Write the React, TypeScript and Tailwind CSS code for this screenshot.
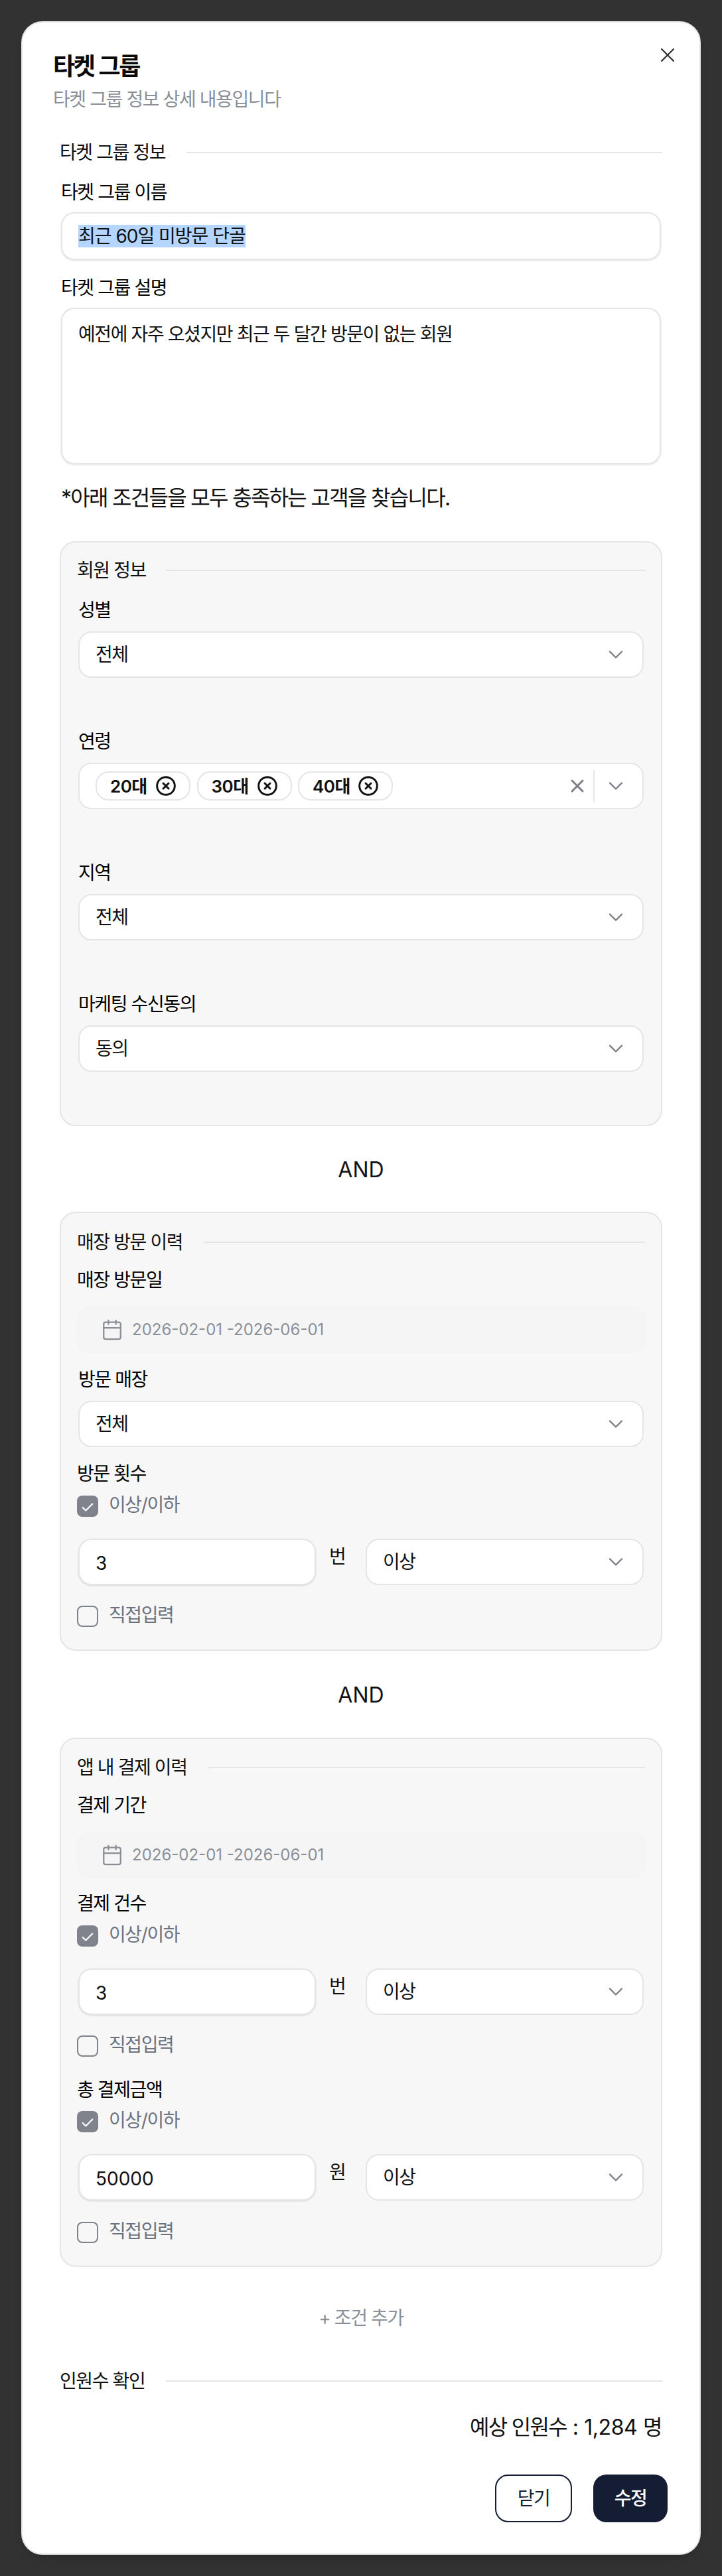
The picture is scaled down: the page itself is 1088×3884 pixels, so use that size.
import React from 'react';
import { Calendar, Check, ChevronDown, CircleX, X } from 'lucide-react';

// 구분선이 붙은 섹션 제목
const SectionTitle = ({ title, gap, className = '' }: { title: string; gap: string; className?: string }) => (
  <div className={`flex items-center h-[40px] ${className}`}>
    <span className="leading-[40px] text-[#111]">{title}</span>
    <div className={`flex-1 h-[2px] bg-[#e5e5e5] ${gap}`} />
  </div>
);

const FieldLabel = ({ text, className = '' }: { text: string; className?: string }) => (
  <div className={`leading-[40px] text-black ${className}`}>{text}</div>
);

const Chevron = () => <ChevronDown size={36} strokeWidth={1.6} className="text-[#7b7e86] shrink-0" />;

const SelectBox = ({ value, className = '' }: { value: string; className?: string }) => (
  <div className={`h-[70px] flex items-center justify-between pl-[24px] pr-[22px] bg-white border-2 border-[#e5e5e5] rounded-[20px] text-[#111] ${className}`}>
    <span>{value}</span>
    <Chevron />
  </div>
);

const DateRange = ({ className = '' }: { className?: string }) => (
  <div className={`h-[70px] flex items-center pl-[34px] bg-[#f5f5f5] border-2 border-[#f3f3f3] rounded-[20px] ${className}`}>
    <Calendar size={34} strokeWidth={1.6} className="text-[#8a8f98]" />
    <span className="ml-[13px] text-[24px] tracking-normal text-[#8a8f98]">2026-02-01 -2026-06-01</span>
  </div>
);

const CheckRow = ({ text, checked = false, className = '' }: { text: string; checked?: boolean; className?: string }) => (
  <div className={`flex items-center h-[32px] ${className}`}>
    {checked ? (
      <div className="w-[32px] h-[32px] rounded-[8px] bg-[#80838c] flex items-center justify-center pt-[3px]">
        <Check size={22} strokeWidth={2.4} className="text-white" />
      </div>
    ) : (
      <div className="w-[32px] h-[32px] rounded-[8px] border-2 border-[#80838c]" />
    )}
    <span className="ml-[16px] -mt-[4px] leading-[32px] text-[#6b7280]">{text}</span>
  </div>
);

const CountRow = ({ value, unit, className = '' }: { value: string; unit: string; className?: string }) => (
  <div className={`flex mx-[2px] ${className}`}>
    <input
      readOnly
      value={value}
      className="w-[358px] h-[70px] pt-[4px] pl-[24px] bg-white border-2 border-[#e5e5e5] rounded-[20px] shadow-sm tracking-normal text-[#111] outline-none"
    />
    <span className="w-[75px] h-[54px] pl-[20px] leading-[54px] text-[#111]">{unit}</span>
    <SelectBox value="이상" className="flex-1" />
  </div>
);

const AndText = ({ className = '' }: { className?: string }) => (
  <div className={`text-center text-[32px] leading-[48px] tracking-normal text-[#111] ${className}`}>AND</div>
);

export default function App() {
  return (
    <div className="min-h-[3884px] bg-[#323232] px-[32px] pt-[32px] text-[28px] tracking-[-1.4px] font-['Inter','Noto_Sans_CJK_KR',sans-serif]">
      <div className="relative h-[3820px] bg-white border-2 border-[#e5e5e5] rounded-[32px] shadow-lg">
        <button className="absolute right-[30px] top-[31px] text-[#333]">
          <X size={36} strokeWidth={1.5} />
        </button>

        <div className="pl-[46px] pt-[46px]">
          <h2 className="text-[36px] leading-[40px] tracking-[-2.3px] font-semibold text-[#0a0a0a]">타켓 그룹</h2>
          <p className="mt-[10px] leading-[40px] text-[#8a8f98]">타켓 그룹 정보 상세 내용입니다</p>
        </div>

        <div className="px-[56px]">
          <SectionTitle title="타켓 그룹 정보" gap="ml-[32px]" className="mt-[40px]" />

          <FieldLabel text="타켓 그룹 이름" className="mt-[20px] ml-[2px]" />
          <div className="mt-[10px] mx-[2px] h-[72px] flex items-center pl-[24px] border-2 border-[#e5e5e5] rounded-[20px] shadow-sm tracking-[-1px] text-[#111]">
            <span className="inline-block leading-[34px] bg-[#b4d5fe]">최근 60일 미방문 단골</span>
          </div>

          <FieldLabel text="타켓 그룹 설명" className="mt-[22px] ml-[2px]" />
          <textarea
            readOnly
            value="예전에 자주 오셨지만 최근 두 달간 방문이 없는 회원"
            className="block mt-[10px] mx-[2px] w-[904px] h-[236px] pt-[20px] pl-[24px] border-2 border-[#e5e5e5] rounded-[20px] shadow-sm leading-[36px] text-[#111] resize-none outline-none"
          />

          <p className="mt-[27px] ml-[2px] text-[32px] leading-[48px] tracking-[-1.7px] text-[#111]">*아래 조건들을 모두 충족하는 고객을 찾습니다.</p>

          {/* 회원 정보 */}
          <div className="mt-[41px] h-[882px] px-[24px] pt-[22px] bg-[#f7f7f7] border-2 border-[#e5e5e5] rounded-[24px]">
            <SectionTitle title="회원 정보" gap="ml-[30px]" />
            <FieldLabel text="성별" className="mt-[20px] ml-[2px]" />
            <SelectBox value="전체" className="mt-[12px] mx-[2px]" />

            <FieldLabel text="연령" className="mt-[76px] ml-[2px]" />
            <div className="mt-[12px] mx-[2px] h-[70px] flex items-center pl-[24px] pr-[22px] bg-white border-2 border-[#e5e5e5] rounded-[20px]">
              {['20대', '30대', '40대'].map(age => (
                <div key={age} className="flex items-center w-[143px] h-[44px] mr-[9.5px] pl-[20px] bg-white border-2 border-[#e5e5e5] rounded-[20px]">
                  <span className="w-[69px] text-[26px] tracking-[-0.5px] font-semibold text-[#111]">{age}</span>
                  <CircleX size={32} strokeWidth={2.2} className="text-[#111] -ml-[1px]" />
                </div>
              ))}
              <X size={32} strokeWidth={2.2} className="ml-auto text-[#7b7e86]" />
              <div className="w-[2px] h-[48px] ml-[8px] mr-[14px] bg-[#e5e5e5]" />
              <Chevron />
            </div>

            <FieldLabel text="지역" className="mt-[76px] ml-[2px]" />
            <SelectBox value="전체" className="mt-[12px] mx-[2px]" />

            <FieldLabel text="마케팅 수신동의" className="mt-[76px] ml-[2px]" />
            <SelectBox value="동의" className="mt-[12px] mx-[2px]" />
          </div>

          <AndText className="mt-[42px]" />

          {/* 매장 방문 이력 */}
          <div className="mt-[39px] h-[662px] px-[24px] pt-[24px] bg-[#f7f7f7] border-2 border-[#e5e5e5] rounded-[24px]">
            <SectionTitle title="매장 방문 이력" gap="ml-[32px]" />
            <FieldLabel text="매장 방문일" className="mt-[17px]" />
            <DateRange className="mt-[20px]" />
            <FieldLabel text="방문 매장" className="mt-[20px] ml-[2px]" />
            <SelectBox value="전체" className="mt-[12px] mx-[2px]" />
            <FieldLabel text="방문 횟수" className="mt-[20px]" />
            <CheckRow text="이상/이하" checked className="mt-[13px]" />
            <CountRow value="3" unit="번" className="mt-[33px]" />
            <CheckRow text="직접입력" className="mt-[31px]" />
          </div>

          <AndText className="mt-[43px]" />

          {/* 앱 내 결제 이력 */}
          <div className="mt-[40px] h-[798px] px-[24px] pt-[23px] bg-[#f7f7f7] border-2 border-[#e5e5e5] rounded-[24px]">
            <SectionTitle title="앱 내 결제 이력" gap="ml-[32px]" />
            <FieldLabel text="결제 기간" className="mt-[17px]" />
            <DateRange className="mt-[20px]" />
            <FieldLabel text="결제 건수" className="mt-[18px]" />
            <CheckRow text="이상/이하" checked className="mt-[13px]" />
            <CountRow value="3" unit="번" className="mt-[33px]" />
            <CheckRow text="직접입력" className="mt-[31px]" />
            <FieldLabel text="총 결제금액" className="mt-[30px]" />
            <CheckRow text="이상/이하" checked className="mt-[12px]" />
            <CountRow value="50000" unit="원" className="mt-[33px]" />
            <CheckRow text="직접입력" className="mt-[32px]" />
          </div>

          <div className="mt-[57px] text-center leading-[40px] text-[#8a8f98]">+ 조건 추가</div>

          <SectionTitle title="인원수 확인" gap="ml-[32px]" className="mt-[55px]" />

          <p className="mt-[26px] text-right text-[32px] leading-[48px] tracking-[-0.4px] text-[#111]">
            <span className="tracking-[-1.7px]">예상 인원수</span> : 1,284 <span>명</span>
          </p>
        </div>

        <div className="mt-[47px] pr-[48px] flex justify-end gap-[32px]">
          <button className="w-[116px] h-[72px] bg-white border-2 border-[#141d33] rounded-[20px] text-[#141d33]">닫기</button>
          <button className="w-[112px] h-[72px] bg-[#141d33] rounded-[20px] font-medium text-white">수정</button>
        </div>
      </div>
    </div>
  );
}
